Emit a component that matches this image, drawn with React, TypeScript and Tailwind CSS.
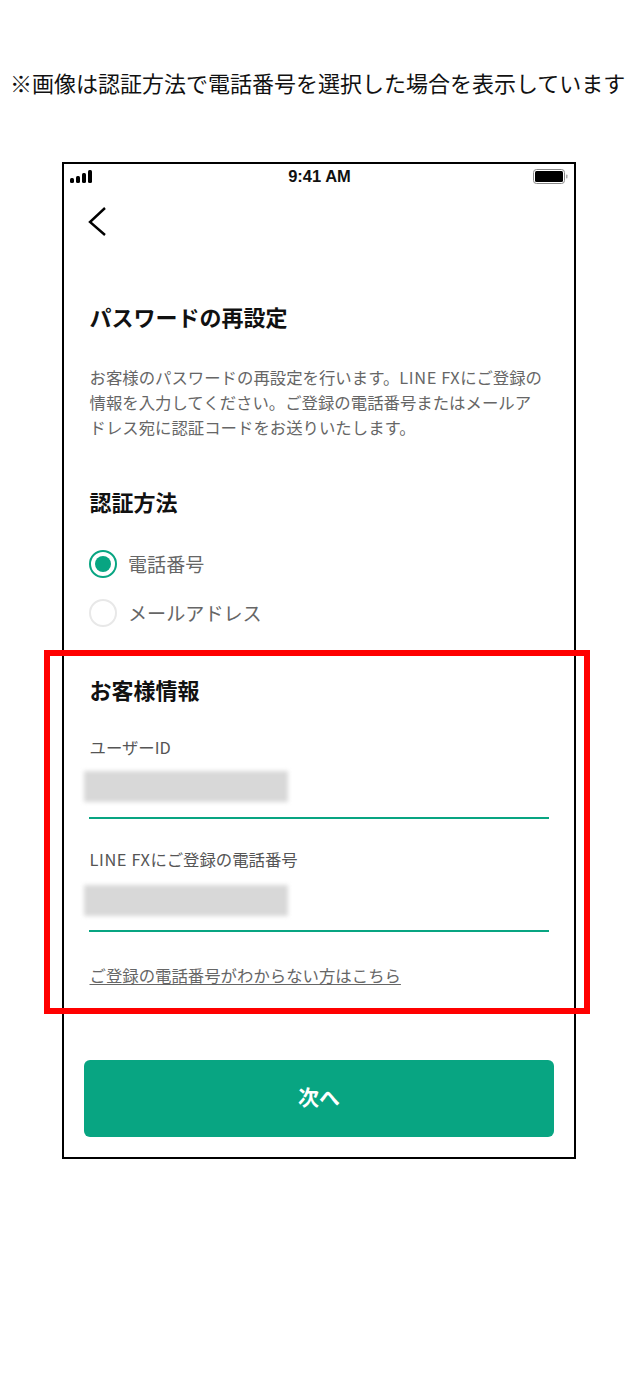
const font = "font-['Noto_Sans_CJK_JP','Noto_Sans',sans-serif]"

function StatusBar() {
  return (
    <div className="relative flex h-[25px] items-center justify-between pl-[6px] pr-[6px]">
      <svg width="23" height="14" viewBox="0 0 23 14" className="text-black">
        <rect x="0" y="8" width="4" height="5" rx="1.5" fill="currentColor" />
        <rect x="6" y="6" width="4" height="7" rx="1.5" fill="currentColor" />
        <rect x="12" y="3" width="4" height="10" rx="1.5" fill="currentColor" />
        <rect x="18" y="0" width="4" height="13" rx="1.5" fill="currentColor" />
      </svg>
      <span className="absolute left-[1px] right-0 text-center font-['Liberation_Sans',sans-serif] text-[16.5px] font-bold text-[#111]">
        9:41 AM
      </span>
      <svg width="35" height="16" viewBox="0 0 35 16">
        <rect x="0.5" y="0.5" width="31" height="14" rx="3" fill="none" stroke="#888" />
        <rect x="2" y="2" width="28" height="11" rx="1.5" fill="#000" />
        <rect x="33" y="5.5" width="1.5" height="4" rx="0.7" fill="#aaa" />
      </svg>
    </div>
  )
}

function Radio({ label, checked }: { label: string; checked?: boolean }) {
  return (
    <div className="flex h-[28px] items-center gap-[11px]">
      <div
        className={`flex h-[28px] w-[28px] items-center justify-center rounded-full border-2 ${
          checked ? 'border-[#08a582]' : 'border-[#e8e8e8]'
        }`}
      >
        {checked && <div className="h-[16px] w-[16px] rounded-full bg-[#08a582]" />}
      </div>
      <span className="text-[19.1px] leading-[28px] text-[#666]">{label}</span>
    </div>
  )
}

function Field({ label, second }: { label: React.ReactNode; second?: boolean }) {
  return (
    <div>
      <p className="ml-[0.5px] text-[16.4px] leading-[22px] text-[#555]">{label}</p>
      <div className={`h-[31px] w-[204px] -ml-[5px] bg-[#d8d8d8] blur-[2px] ${second ? 'mt-[15px]' : 'mt-[13px]'}`} />
      <div className={`h-[2px] bg-[#08a582] ${second ? 'mt-[14px]' : 'mt-[15px]'}`} />
    </div>
  )
}

const LineFx = () => <span className="tracking-[0.6px]">LINE FX</span>

export default function App() {
  return (
    <div className={`relative h-[1398px] w-[638px] overflow-hidden bg-white ${font}`}>
      <p className="whitespace-nowrap pt-[68px] pl-[10px] text-[22px] leading-[28px] text-[#111]">
        ※画像は認証方法で電話番号を選択した場合を表示しています
      </p>

      <div className="ml-[62px] mt-[66px] h-[997px] w-[514px] border-2 border-black">
        <StatusBar />

        <div className="pl-[23px] pt-[17px]">
          <svg width="20" height="30" viewBox="0 0 20 30" fill="none" stroke="#000" strokeWidth="2.4">
            <path d="M18 2 L3 16 L18 29" />
          </svg>
        </div>

        <div className="px-[25px]">
          <h1 className="ml-[0.5px] mt-[65px] text-[22px] font-bold leading-[30px] text-[#111]">パスワードの再設定</h1>

          <p className="ml-[0.5px] mt-[34px] whitespace-nowrap text-[16.4px] leading-[25px] text-[#666]">
            お客様のパスワードの再設定を行います。<LineFx />にご登録の
            <br />
            情報を入力してください。ご登録の電話番号またはメールア
            <br />
            ドレス宛に認証コードをお送りいたします。
          </p>

          <h2 className="ml-[0.5px] mt-[46px] text-[22px] font-bold leading-[30px] text-[#111]">認証方法</h2>

          <div className="mt-[34px] flex flex-col gap-[21px]">
            <Radio label="電話番号" checked />
            <Radio label="メールアドレス" />
          </div>

          <h2 className="ml-[0.5px] mt-[47px] text-[22px] font-bold leading-[30px] text-[#111]">お客様情報</h2>

          <div className="mt-[32px] flex flex-col gap-[29px]">
            <Field label="ユーザーID" />
            <Field
              second
              label={
                <>
                  <LineFx />
                  にご登録の電話番号
                </>
              }
            />
          </div>

          <a className="ml-[0.5px] mt-[32px] block w-fit text-[16.4px] leading-[22px] text-[#666] underline underline-offset-2">
            ご登録の電話番号がわからない方はこちら
          </a>
        </div>

        <div className="mt-[74px] px-[20px]">
          <button className="flex h-[77px] w-full items-center justify-center rounded-[6px] bg-[#08a582] pb-[4px] text-[21px] font-bold text-white">
            次へ
          </button>
        </div>
      </div>

      {/* red highlight lying over the phone */}
      <div className="absolute left-[44px] top-[650px] h-[364px] w-[546px] border-[6px] border-[#ff0000]" />
    </div>
  )
}
